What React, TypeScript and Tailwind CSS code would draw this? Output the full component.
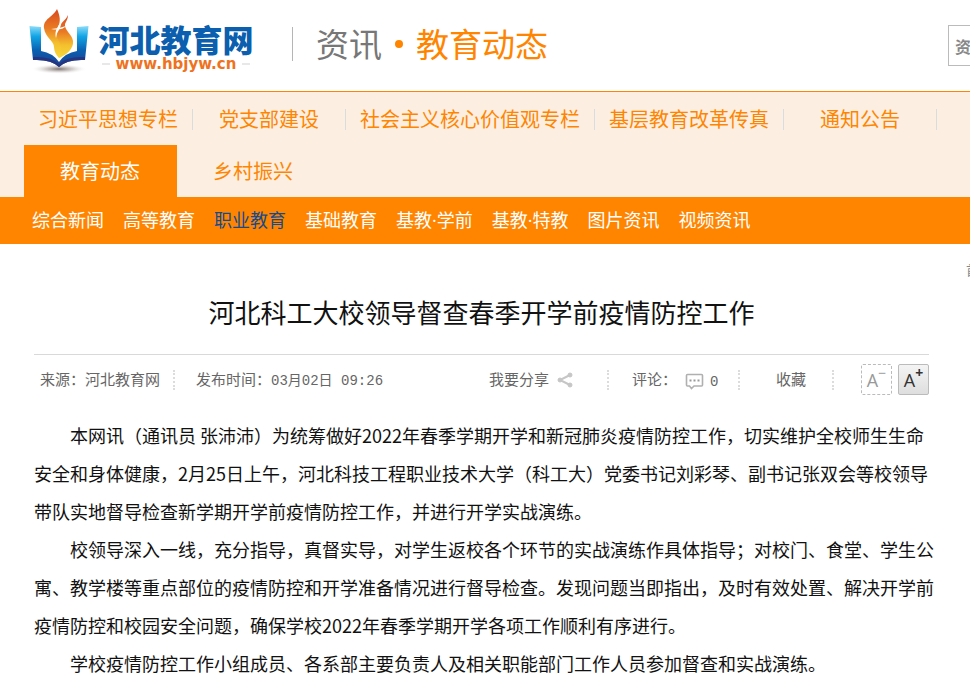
import React from 'react';

const YAHEI = "font-['Noto_Sans_CJK_SC',sans-serif]";

interface NavItem {
  label: string;
  active?: boolean;
}

const CHANNELS: NavItem[][] = [
  [
    { label: '习近平思想专栏' },
    { label: '党支部建设' },
    { label: '社会主义核心价值观专栏' },
    { label: '基层教育改革传真' },
    { label: '通知公告' },
  ],
  [{ label: '教育动态', active: true }, { label: '乡村振兴' }],
];

const SUB_CHANNELS: NavItem[] = [
  { label: '综合新闻' },
  { label: '高等教育' },
  { label: '职业教育', active: true },
  { label: '基础教育' },
  { label: '基教·学前' },
  { label: '基教·特教' },
  { label: '图片资讯' },
  { label: '视频资讯' },
];

const PARAGRAPHS: string[][] = [
  [
    '本网讯（通讯员 张沛沛）为统筹做好2022年春季学期开学和新冠肺炎疫情防控工作，切实维护全校师生生命',
    '安全和身体健康，2月25日上午，河北科技工程职业技术大学（科工大）党委书记刘彩琴、副书记张双会等校领导',
    '带队实地督导检查新学期开学前疫情防控工作，并进行开学实战演练。',
  ],
  [
    '校领导深入一线，充分指导，真督实导，对学生返校各个环节的实战演练作具体指导；对校门、食堂、学生公',
    '寓、教学楼等重点部位的疫情防控和开学准备情况进行督导检查。发现问题当即指出，及时有效处置、解决开学前',
    '疫情防控和校园安全问题，确保学校2022年春季学期开学各项工作顺利有序进行。',
  ],
  ['学校疫情防控工作小组成员、各系部主要负责人及相关职能部门工作人员参加督查和实战演练。'],
];

const LogoMark = () => (
  <svg width="64" height="70" viewBox="0 0 64 70" aria-hidden="true">
    <defs>
      <linearGradient id="book" x1="0" y1="0" x2="0" y2="1">
        <stop offset="0" stopColor="#8edcf8" />
        <stop offset="0.25" stopColor="#12a5e6" />
        <stop offset="0.6" stopColor="#0a5fb0" />
        <stop offset="1" stopColor="#1c3f90" />
      </linearGradient>
      <linearGradient id="flame" x1="0" y1="0" x2="0" y2="1">
        <stop offset="0" stopColor="#d8481e" />
        <stop offset="0.4" stopColor="#ea7c24" />
        <stop offset="0.7" stopColor="#f4c02e" />
        <stop offset="1" stopColor="#f7d83a" />
      </linearGradient>
      <radialGradient id="shadow">
        <stop offset="0" stopColor="#7d7472" />
        <stop offset="0.5" stopColor="#c4bfbd" stopOpacity="0.7" />
        <stop offset="1" stopColor="#ffffff" stopOpacity="0" />
      </radialGradient>
    </defs>
    <ellipse cx="30" cy="61" rx="28" ry="5" fill="url(#shadow)" />
    <path d="M0.5 18 L12 19 V43 Q24 45 30 54 Q36 45 48 43 V19 L59.5 18 L56 52 Q38 51 30 59 Q22 51 4 52 Z" fill="url(#book)" />
    <path d="M4 49 Q22 48 30 56 Q38 48 56 49 L56 52 Q38 51 30 59 Q22 51 4 52 Z" fill="#26357f" />
    <path d="M28 1 C24 9 14 11 15 20 C16 29 25 33 25 39 C25 43 27 47 30 50 C37 47 36 40 31 34 C28 28 26 25 29 19 C32 13 31 8 28 1 Z" fill="url(#flame)" />
    <path d="M39 7 C37 13 29 16 27 23 C26 29 31 33 32 39 C33 44 31 48 30 50 C37 47 45 41 44 33 C43 26 35 22 36 16 C37 13 39 11 39 7 Z" fill="url(#flame)" />
    <path d="M22 21 Q29 21 37 18 Q33 23 22 21 Z" fill="#fff" />
    <path d="M33 13 C29 18 25 23 27 30 Q28 24 31 20 Q32 17 33 13 Z" fill="#fff" />
  </svg>
);

const Logo = () => (
  <a href="#" aria-label="河北教育网" className="flex shrink-0 items-start gap-1.5 pt-2">
    <LogoMark />
    <span className="flex w-[154px] flex-col items-center pt-[13px]">
      <span className="text-[31px] leading-9 font-black text-[#0b5fae]">河北教育网</span>
      <span className="flex items-center gap-1.5 font-['DejaVu_Sans',sans-serif] text-[15px] leading-[14px] font-bold text-[#ee7220]">
        <span className="h-0.5 w-2 bg-[#e8e8e8]" />
        www.hbjyw.cn
        <span className="h-0.5 w-2 bg-[#e8e8e8]" />
      </span>
    </span>
  </a>
);

const Header = () => (
  <header className="flex h-[91px] pl-[29px]">
    <Logo />
    <div className="mt-[27px] ml-[39px] h-[34px] w-px bg-[#b5b5b5]" />
    <div className="ml-[23px] flex w-[632px] items-center pb-[3px] text-[33px]">
      <a href="#" className="text-[#777]">资讯</a>
      <span className="mx-[13px] size-2 rounded-full bg-[#ff8500]" />
      <a href="#" className="text-[#ff8500]">教育动态</a>
    </div>
    <button type="button" className="mt-[25px] h-[41px] w-[100px] border border-[#bbb] pl-1.5 text-left text-base font-bold text-[#888]">
      资讯
    </button>
  </header>
);

const ChannelNav = () => (
  <nav className="border-t border-[#ff8500] bg-[#fcefe2] pt-px pl-6">
    {CHANNELS.map((row, i) => (
      <ul key={i} className="flex h-[52px]">
        {row.map((item) => (
          <li key={item.label} className={`flex min-w-[153px] items-center ${item.active ? 'bg-[#ff8500]' : ''}`}>
            <a href="#" className={`flex-1 pr-[15px] pl-3.5 text-center text-xl ${item.active ? 'text-white' : 'text-[#ff8500]'}`}>
              {item.label}
            </a>
            {i === 0 && <span className="-ml-px h-[21px] w-px bg-[#d9dcdf]" />}
          </li>
        ))}
      </ul>
    ))}
  </nav>
);

const SubNav = () => (
  <nav className="flex h-[47px] items-center gap-[19px] bg-[#ff8500] pb-0.5 pl-8 font-['Open_Sans','Noto_Sans_CJK_SC',sans-serif] text-lg">
    {SUB_CHANNELS.map((item) => (
      <a key={item.label} href="#" className={item.active ? 'text-[#154a8c]' : 'text-white'}>
        {item.label}
      </a>
    ))}
  </nav>
);

const Divider = () => <span className="h-5 border-l-2 border-dotted border-[#dcdcdc]" />;

const ShareIcon = () => (
  <svg width="16" height="16" viewBox="0 0 16 16" fill="#c6c6c6" stroke="#c6c6c6" aria-hidden="true">
    <path d="M13 3 L3 8 L13 13" fill="none" strokeWidth="2" />
    <circle cx="13" cy="3" r="2" />
    <circle cx="3" cy="8" r="2" />
    <circle cx="13" cy="13" r="2" />
  </svg>
);

const CommentIcon = () => (
  <svg width="19" height="17" viewBox="0 0 19 17" aria-hidden="true">
    <path d="M2.5 1.5 H16.5 Q17.5 1.5 17.5 2.5 V12 Q17.5 13 16.5 13 H9 L6.5 15.5 L4.5 13 H2.5 Q1.5 13 1.5 12 V2.5 Q1.5 1.5 2.5 1.5 Z" fill="none" stroke="#b0b0b0" strokeWidth="1.6" />
    <path d="M4.5 6.5 H6.5 V8.5 H4.5 Z M8.5 6.5 H10.5 V8.5 H8.5 Z M12.5 6.5 H14.5 V8.5 H12.5 Z" fill="#999" />
  </svg>
);

const MetaBar = () => (
  <div className="flex h-[50px] items-center border-t border-[#d9d9d9] pl-1.5 text-[15px] text-[#666]">
    <span className="w-[133px]">来源：河北教育网</span>
    <Divider />
    <span className="ml-[21px] w-[293px]">
      发布时间：<time className="font-['Liberation_Mono','Noto_Sans_CJK_SC',monospace] text-sm">03月02日 09:26</time>
    </span>
    <button type="button" className="flex w-[118px] items-center gap-2">
      我要分享
      <ShareIcon />
    </button>
    <Divider />
    <a href="#" className="ml-[23px] flex w-[106px] items-center">
      评论：
      <span className="ml-2 pt-1"><CommentIcon /></span>
      <span className="ml-1.5 pt-1 font-['Liberation_Mono',monospace] text-sm leading-5">0</span>
    </a>
    <Divider />
    <button type="button" className="w-[92px] pl-2.5 text-center">收藏</button>
    <Divider />
    <div className="ml-auto flex gap-1.5">
      <button type="button" aria-label="缩小字号" className="flex size-[31px] justify-center rounded-xs border border-dashed border-[#bbb] font-['Open_Sans',sans-serif] text-lg leading-[30px] text-[#999]">
        A<sup className="top-0 text-sm leading-4">−</sup>
      </button>
      <button type="button" aria-label="放大字号" className="flex size-[31px] justify-center rounded-xs border border-[#bbb] bg-linear-to-b from-[#f4f4f4] to-[#dedede] font-['Open_Sans',sans-serif] text-lg leading-[30px] text-[#333]">
        A<sup className="top-0 text-sm leading-4 font-bold">+</sup>
      </button>
    </div>
  </div>
);

const Article = () => (
  <article className="w-[895px]">
    <h1 className="pt-12 pb-[22px] text-center text-[26px] leading-10 text-[#111]">
      河北科工大校领导督查春季开学前疫情防控工作
    </h1>
    <MetaBar />
    <div className="pt-3 text-lg leading-[38px] text-[#111]">
      {PARAGRAPHS.map((lines) => (
        <p key={lines[0]} className="indent-9">
          {lines.map((line, i) => (
            <React.Fragment key={line}>
              {i > 0 && <br />}
              {line}
            </React.Fragment>
          ))}
        </p>
      ))}
    </div>
  </article>
);

const App: React.FC = () => (
  <div className={`overflow-hidden bg-white whitespace-nowrap ${YAHEI}`}>
    <div className="min-w-[1200px]">
      <Header />
      <ChannelNav />
      <SubNav />
      <main className="flex pl-[34px]">
        <Article />
        <aside className="ml-[37px] pt-4 text-[13px] text-[#888]">
          <a href="#">首页</a>
        </aside>
      </main>
    </div>
  </div>
);

export default App;
